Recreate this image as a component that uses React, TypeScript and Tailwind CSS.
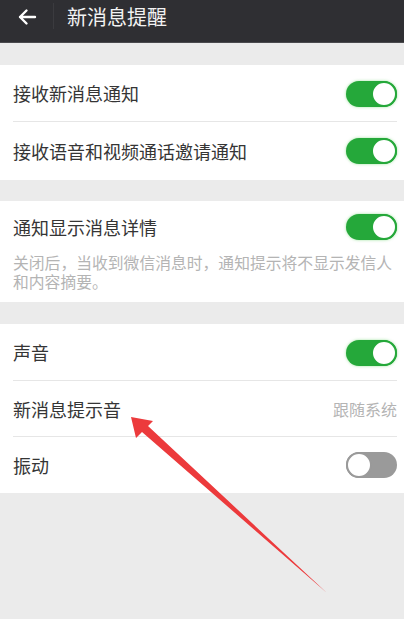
import React from "react";

const font = { fontFamily: '"Noto Sans CJK SC", "Noto Sans", sans-serif' };

function Toggle({ on }: { on: boolean }) {
  if (on) {
    return (
      <div className="w-[51px] h-[26px] rounded-full bg-[#25a83a] relative shrink-0 shadow-[0_0_3px_rgba(60,200,60,0.5)]">
        <div className="absolute right-0 top-0 w-[26px] h-[26px] rounded-full bg-white border-[2px] border-[#25a83a]" />
      </div>
    );
  }
  return (
    <div className="w-[51px] h-[26px] rounded-full bg-[#9a9a9a] relative shrink-0">
      <div className="absolute left-0 top-0 w-[26px] h-[26px] rounded-full bg-white border-[2px] border-[#9a9a9a]" />
    </div>
  );
}

function Row({
  label,
  right,
  divider,
  h = "h-[57px]",
}: {
  label: string;
  right: React.ReactNode;
  divider?: boolean;
  h?: string;
}) {
  return (
    <div className={`${h} flex items-center pl-[13px] pr-[7px] relative`}>
      <span className="flex-1 text-[18px] text-[#353535]">{label}</span>
      {right}
      {divider && <div className="absolute left-[13px] right-[7px] bottom-0 h-px bg-[#e6e6e6]" />}
    </div>
  );
}

export default function App() {
  return (
    <div className="w-[404px] h-[619px] bg-[#ebebeb] relative overflow-hidden" style={font}>
      <div className="h-[43px] bg-[#2f2f33] flex items-start pt-[3px] border-b border-[#4a4a4e]">
        <div className="w-[53px] h-[28px] flex items-center justify-center">
          <svg width="20" height="18" viewBox="0 0 20 18" fill="none">
            <path d="M18 9H3M9.5 2.5L3 9l6.5 6.5" stroke="#fff" strokeWidth="2.4" strokeLinecap="round" strokeLinejoin="round" />
          </svg>
        </div>
        <div className="w-px h-[26px] bg-[#3b3b3f]" />
        <span className="ml-[13px] text-[20px] leading-[28px] text-[#f2f2f2]">新消息提醒</span>
      </div>

      <div className="h-[22px]" />
      <div className="bg-white">
        <Row label="接收新消息通知" right={<Toggle on />} divider />
        <Row label="接收语音和视频通话邀请通知" right={<Toggle on />} h="h-[58px]" />
      </div>

      <div className="h-[21px]" />
      <div className="bg-white pb-[11px]">
        <Row label="通知显示消息详情" right={<Toggle on />} h="h-[52px]" />
        <div className="pl-[13px] text-[15.8px] leading-[19px] text-[#b4b4b4] whitespace-nowrap">
          关闭后，当收到微信消息时，通知提示将不显示发信人
          <br />
          和内容摘要。
        </div>
      </div>

      <div className="h-[22px]" />
      <div className="bg-white">
        <Row label="声音" right={<Toggle on />} divider />
        <Row label="新消息提示音" right={<span className="text-[16px] text-[#b4b4b4]">跟随系统</span>} divider h="h-[56px]" />
        <Row label="振动" right={<Toggle on={false} />} h="h-[56px]" />
      </div>

      <svg className="absolute left-0 top-0 pointer-events-none" width="404" height="619" viewBox="0 0 404 619">
        <polygon
          points="131,417 153,421 148,426 327,593 142,432 136,438"
          fill="#ec3a3c"
        />
      </svg>
    </div>
  );
}
